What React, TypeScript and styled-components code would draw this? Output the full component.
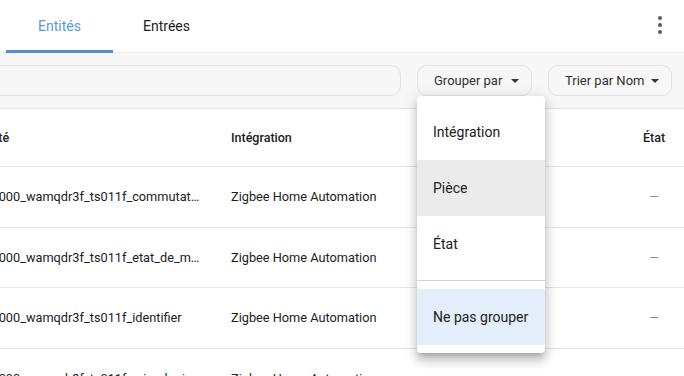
import styled, { createGlobalStyle } from 'styled-components';

const GlobalStyle = createGlobalStyle`
  html, body {
    margin: 0;
    padding: 0;
    background: #ffffff;
    font-family: Roboto, "Noto Sans", sans-serif;
    color: #212121;
  }
  #root {
    width: 684px;
    height: 376px;
    overflow: hidden;
  }
`;

const Page = styled.div`
  position: relative;
  width: 684px;
  height: 376px;
  overflow: hidden;
  background: #fff;
`;

const TabBar = styled.div`
  display: flex;
  align-items: stretch;
  height: 53px;
  padding-left: 6px;
  padding-right: 12px;
  border-bottom: 1px solid #ececec;
  box-sizing: border-box;
`;

const Tab = styled.div<{ $active?: boolean }>`
  display: flex;
  align-items: center;
  justify-content: center;
  width: 107px;
  font-size: 14px;
  color: ${(p) => (p.$active ? '#5a9ad8' : '#212121')};
  border-bottom: 3px solid ${(p) => (p.$active ? '#4e8fd2' : 'transparent')};
  margin-bottom: -1px;
  padding-top: 2px;
  box-sizing: border-box;
`;

const Spacer = styled.div`
  flex: 1;
`;

const Kebab = styled.div`
  display: flex;
  flex-direction: column;
  align-items: center;
  justify-content: center;
  gap: 3px;
  width: 24px;
  padding-bottom: 2px;
`;

const Dot = styled.span`
  width: 4px;
  height: 4px;
  border-radius: 50%;
  background: #5a5a5a;
`;

const Toolbar = styled.div`
  display: flex;
  align-items: center;
  gap: 16px;
  height: 56px;
  padding-right: 12px;
  background: #f7f7f7;
  border-bottom: 1px solid #e4e4e4;
  box-sizing: border-box;
`;

const Search = styled.div`
  flex: 1;
  height: 31px;
  margin-left: -20px;
  border: 1px solid #e2e2e2;
  border-radius: 10px;
  box-sizing: border-box;
`;

const Anchor = styled.div`
  position: relative;
`;

const SelectButton = styled.div<{ $width: number }>`
  display: flex;
  align-items: center;
  justify-content: space-between;
  width: ${(p) => p.$width}px;
  height: 31px;
  padding: 0 12px 0 16px;
  border: 1px solid #e2e2e2;
  border-radius: 10px;
  box-sizing: border-box;
  font-size: 13px;
  color: #303030;
`;

const Caret = styled.span`
  width: 0;
  height: 0;
  border-left: 4px solid transparent;
  border-right: 4px solid transparent;
  border-top: 4px solid #333;
  margin-top: 1px;
`;

const Menu = styled.div`
  position: absolute;
  top: 31px;
  left: 0;
  width: 128px;
  padding: 8px 0;
  background: #fff;
  border-radius: 4px;
  box-shadow: 0 5px 5px -3px rgba(0, 0, 0, 0.2), 0 8px 10px 1px rgba(0, 0, 0, 0.14),
    0 3px 14px 2px rgba(0, 0, 0, 0.12);
  z-index: 2;
`;

const MenuItem = styled.div<{ $tone?: 'hover' | 'selected' }>`
  display: flex;
  align-items: center;
  height: 56px;
  padding-left: 16px;
  font-size: 14px;
  color: #212121;
  background: ${(p) =>
    p.$tone === 'hover' ? '#ebebeb' : p.$tone === 'selected' ? '#e3eefa' : 'transparent'};
`;

const MenuDivider = styled.div`
  height: 1px;
  margin: 8px 0;
  background: #d6d6d6;
`;

const Table = styled.div`
  margin-left: -35px;
`;

const Row = styled.div<{ $header?: boolean }>`
  display: grid;
  grid-template-columns: 250px 230px 1fr 60px;
  align-items: center;
  height: ${(p) => (p.$header ? 58 : 60.5)}px;
  border-bottom: 1px solid #e6e6e6;
  box-sizing: border-box;
  font-size: ${(p) => (p.$header ? 12.5 : 12.75)}px;
  font-weight: ${(p) => (p.$header ? 500 : 400)};
  color: #212121;
`;

const Cell = styled.div<{ $center?: boolean; $lead?: number; $trail?: number }>`
  padding-left: ${(p) => p.$lead ?? 16}px;
  padding-right: ${(p) => p.$trail ?? 16}px;
  white-space: nowrap;
  overflow: hidden;
  text-overflow: ellipsis;
  text-align: ${(p) => (p.$center ? 'center' : 'left')};
`;

const Dash = styled.span`
  color: #8a8a8a;
  font-size: 12px;
`;

const rows = [
  'tz3000_wamqdr3f_ts011f_commutateur',
  'tz3000_wamqdr3f_ts011f_etat_de_mise_sous_tension',
  'tz3000_wamqdr3f_ts011f_identifier',
  'tz3000_wamqdr3f_ts011f_micrologiciel',
];

export default function App() {
  return (
    <Page>
      <GlobalStyle />
      <TabBar>
        <Tab $active>Entités</Tab>
        <Tab>Entrées</Tab>
        <Spacer />
        <Kebab>
          <Dot />
          <Dot />
          <Dot />
        </Kebab>
      </TabBar>
      <Toolbar>
        <Search />
        <Anchor>
          <SelectButton $width={115}>
            Grouper par <Caret />
          </SelectButton>
          <Menu>
            <MenuItem>Intégration</MenuItem>
            <MenuItem $tone="hover">Pièce</MenuItem>
            <MenuItem>État</MenuItem>
            <MenuDivider />
            <MenuItem $tone="selected">Ne pas grouper</MenuItem>
          </Menu>
        </Anchor>
        <SelectButton $width={124}>
          Trier par Nom <Caret />
        </SelectButton>
      </Toolbar>
      <Table>
        <Row $header>
          <Cell $lead={12}>Entité</Cell>
          <Cell>Intégration</Cell>
          <Cell />
          <Cell $center>État</Cell>
        </Row>
        {rows.map((id) => (
          <Row key={id}>
            <Cell $trail={14}>{id}</Cell>
            <Cell>Zigbee Home Automation</Cell>
            <Cell />
            <Cell $center>
              <Dash>—</Dash>
            </Cell>
          </Row>
        ))}
      </Table>
    </Page>
  );
}
